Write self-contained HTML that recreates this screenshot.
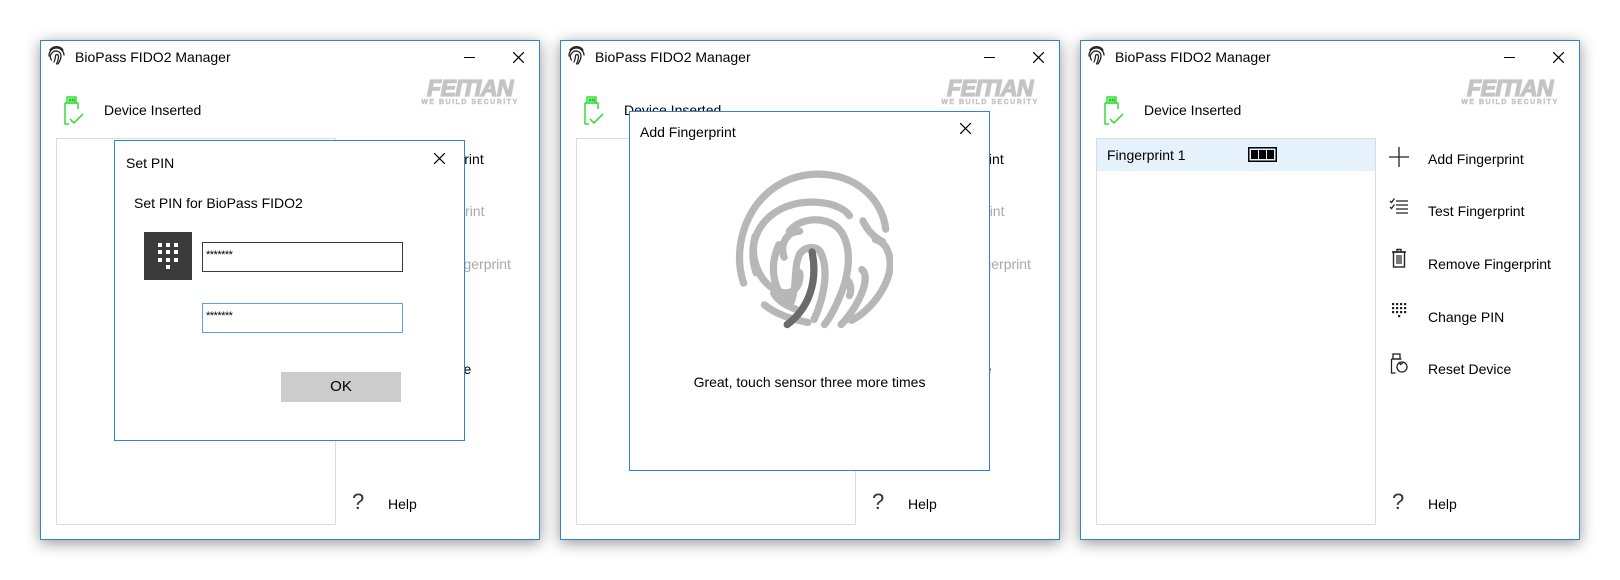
<!DOCTYPE html>
<html><head><meta charset="utf-8"><style>
*{margin:0;padding:0;box-sizing:border-box}
body{width:1620px;height:580px;background:#fff;position:relative;overflow:hidden;font-family:"Liberation Sans",sans-serif;color:#000}
.win{position:absolute;top:40px;width:500px;height:500px;background:#fff;border:1px solid #2a86d8;box-shadow:0 3px 14px rgba(0,0,0,.42)}
.a{position:absolute}
.title{left:34px;top:8px;font-size:14px;white-space:nowrap}
.min{left:423px;top:16px;width:11px;height:1px;background:#000}
.logo{left:380px;top:37px;width:98px;text-align:center;color:#c4c4c4;font-weight:bold;font-style:italic}
.logo b{display:block;font-size:23px;letter-spacing:-0.5px;line-height:21px;-webkit-text-stroke:1.3px #c4c4c4}
.logo i{display:block;font-size:7px;letter-spacing:1.5px;line-height:8px;font-style:normal;-webkit-text-stroke:0.4px #c4c4c4}
.dev{left:63px;top:61px;font-size:14px}
.list{left:15px;top:97px;width:280px;height:387px;border:1px solid #dcdcdc}
.m{left:347px;font-size:14px;white-space:nowrap}
.g{color:#a8a8a8}
.help{left:347px;top:455px;font-size:14px}
.q{left:311px;top:448px;font-size:22px;color:#333}
.dlg{position:absolute;background:#fff;border:1px solid #2a86d8}
</style></head><body>

<!-- WINDOW 1 -->
<div class="win" style="left:40px">
 <svg class="a" style="left:6px;top:5px" width="19" height="20" viewBox="0 0 19 20" fill="none" stroke="#222" stroke-width="1.3" stroke-linecap="round"><path d="M2 10a7.5 7.5 0 0 1 15-1"/><path d="M4.5 14a5 5 0 0 1 .5-7 5 5 0 0 1 9 3c0 3-1 5-3 8"/><path d="M7 16c1-2 1.5-4 1.5-6a1.5 1.5 0 0 1 3 0c0 3-.5 5-2 8"/><path d="M3 4a8 8 0 0 1 13 0"/></svg>
 <div class="a title">BioPass FIDO2 Manager</div>
 <div class="a min"></div>
 <svg class="a" style="left:472px;top:11px" width="11" height="11"><path d="M0 0L11 11M11 0L0 11" stroke="#000" stroke-width="1.2"/></svg>
 <div class="a logo"><b>FEITIAN</b><i>WE BUILD SECURITY</i></div>
 <svg class="a" style="left:22px;top:55px" width="24" height="30" viewBox="0 0 24 30" fill="none" stroke="#1bd61b" stroke-width="1.3"><rect x="4" y="1" width="9" height="6"/><rect x="6" y="3" width="2" height="2" fill="#1bd61b"/><rect x="9.5" y="3" width="2" height="2" fill="#1bd61b"/><path d="M2 7h13v6M2 7v21h4"/><path d="M7 23l4 4 9-9"/></svg>
 <div class="a dev">Device Inserted</div>
 <div class="a list"></div>
 <div class="a m" style="top:110px">Add Fingerprint</div>
 <div class="a m g" style="top:162px">Test Fingerprint</div>
 <div class="a m g" style="top:215px">Remove Fingerprint</div>
 <div class="a m" style="top:268px">Change PIN</div>
 <div class="a m" style="top:320px">Reset Device</div>
 <div class="a q">?</div>
 <div class="a help">Help</div>
 <div class="dlg" style="left:73px;top:99px;width:351px;height:301px">
  <div class="a" style="left:11px;top:14px;font-size:14px">Set PIN</div>
  <svg class="a" style="left:319px;top:12px" width="11" height="11"><path d="M0 0L11 11M11 0L0 11" stroke="#000" stroke-width="1.2"/></svg>
  <div class="a" style="left:19px;top:54px;font-size:14px">Set PIN for BioPass FIDO2</div>
  <div class="a" style="left:29px;top:91px;width:48px;height:48px;background:#3b3b3b">
   <svg width="48" height="48"><g fill="#fff"><rect x="14" y="11" width="4" height="4"/><rect x="22" y="11" width="4" height="4"/><rect x="30" y="11" width="4" height="4"/><rect x="14" y="18" width="4" height="4"/><rect x="22" y="18" width="4" height="4"/><rect x="30" y="18" width="4" height="4"/><rect x="14" y="26" width="4" height="4"/><rect x="22" y="26" width="4" height="4"/><rect x="30" y="26" width="4" height="4"/><rect x="22" y="33" width="4" height="4"/></g></svg>
  </div>
  <div class="a" style="left:87px;top:101px;width:201px;height:30px;border:1.5px solid #3a3a3a;font-size:11px;padding:6px 0 0 3px;letter-spacing:-0.5px">*******</div>
  <div class="a" style="left:87px;top:162px;width:201px;height:30px;border:1.5px solid #5aa2e2;font-size:11px;padding:6px 0 0 3px;letter-spacing:-0.5px">*******</div>
  <div class="a" style="left:166px;top:231px;width:120px;height:30px;background:#cccccc;font-size:15px;text-align:center;line-height:30px">OK</div>
 </div>
</div>

<!-- WINDOW 2 -->
<div class="win" style="left:560px">
 <svg class="a" style="left:6px;top:5px" width="19" height="20" viewBox="0 0 19 20" fill="none" stroke="#222" stroke-width="1.3" stroke-linecap="round"><path d="M2 10a7.5 7.5 0 0 1 15-1"/><path d="M4.5 14a5 5 0 0 1 .5-7 5 5 0 0 1 9 3c0 3-1 5-3 8"/><path d="M7 16c1-2 1.5-4 1.5-6a1.5 1.5 0 0 1 3 0c0 3-.5 5-2 8"/><path d="M3 4a8 8 0 0 1 13 0"/></svg>
 <div class="a title">BioPass FIDO2 Manager</div>
 <div class="a min"></div>
 <svg class="a" style="left:472px;top:11px" width="11" height="11"><path d="M0 0L11 11M11 0L0 11" stroke="#000" stroke-width="1.2"/></svg>
 <div class="a logo"><b>FEITIAN</b><i>WE BUILD SECURITY</i></div>
 <svg class="a" style="left:22px;top:55px" width="24" height="30" viewBox="0 0 24 30" fill="none" stroke="#1bd61b" stroke-width="1.3"><rect x="4" y="1" width="9" height="6"/><rect x="6" y="3" width="2" height="2" fill="#1bd61b"/><rect x="9.5" y="3" width="2" height="2" fill="#1bd61b"/><path d="M2 7h13v6M2 7v21h4"/><path d="M7 23l4 4 9-9"/></svg>
 <div class="a dev">Device Inserted</div>
 <div class="a list"></div>
 <div class="a m" style="top:110px">Add Fingerprint</div>
 <div class="a m g" style="top:162px">Test Fingerprint</div>
 <div class="a m g" style="top:215px">Remove Fingerprint</div>
 <div class="a m" style="top:268px">Change PIN</div>
 <div class="a m" style="top:320px">Reset Device</div>
 <div class="a q">?</div>
 <div class="a help">Help</div>
 <div class="dlg" style="left:68px;top:70px;width:361px;height:360px">
  <div class="a" style="left:10px;top:12px;font-size:14px">Add Fingerprint</div>
  <svg class="a" style="left:330px;top:11px" width="11" height="11"><path d="M0 0L11 11M11 0L0 11" stroke="#000" stroke-width="1.2"/></svg>
  <svg class="a" style="left:97px;top:57px" width="166" height="168" viewBox="0 0 160 162" fill="none" stroke="#b7b7b7" stroke-width="7" stroke-linecap="round">
   <path d="M16 110C2 70 25 8 85 5C125 4 150 30 153 58"/>
   <path d="M143 68C157 72 160 90 155 105C148 125 132 140 120 146"/>
   <path d="M28 100C15 60 45 30 85 32C105 33 115 40 118 45"/>
   <path d="M131 50C135 58 140 65 150 70"/>
   <path d="M27 65C22 85 30 110 50 118C65 124 72 110 70 100"/>
   <path d="M45 120C50 128 58 132 66 135"/>
   <path d="M60 60C70 48 90 45 105 55C120 68 120 95 110 120C104 135 98 145 94 150"/>
   <path d="M50 73C40 95 45 120 60 127"/>
   <path d="M55 85C50 70 60 60 70 60"/>
   <path d="M130 97C140 105 125 135 110 150"/>
   <path d="M115 106C120 110 120 118 118 122"/>
   <path d="M62 128C68 110 64 95 70 82C76 74 86 74 90 80C98 95 95 120 84 145"/>
   <path d="M36 131C50 142 65 145 78 148"/>
   <path d="M82 80C88 110 78 135 58 150" stroke="#6b6b6b"/>
  </svg>
  <div class="a" style="left:0;width:359px;top:262px;text-align:center;font-size:14px">Great, touch sensor three more times</div>
 </div>
</div>

<!-- WINDOW 3 -->
<div class="win" style="left:1080px">
 <svg class="a" style="left:6px;top:5px" width="19" height="20" viewBox="0 0 19 20" fill="none" stroke="#222" stroke-width="1.3" stroke-linecap="round"><path d="M2 10a7.5 7.5 0 0 1 15-1"/><path d="M4.5 14a5 5 0 0 1 .5-7 5 5 0 0 1 9 3c0 3-1 5-3 8"/><path d="M7 16c1-2 1.5-4 1.5-6a1.5 1.5 0 0 1 3 0c0 3-.5 5-2 8"/><path d="M3 4a8 8 0 0 1 13 0"/></svg>
 <div class="a title">BioPass FIDO2 Manager</div>
 <div class="a min"></div>
 <svg class="a" style="left:472px;top:11px" width="11" height="11"><path d="M0 0L11 11M11 0L0 11" stroke="#000" stroke-width="1.2"/></svg>
 <div class="a logo"><b>FEITIAN</b><i>WE BUILD SECURITY</i></div>
 <svg class="a" style="left:22px;top:55px" width="24" height="30" viewBox="0 0 24 30" fill="none" stroke="#1bd61b" stroke-width="1.3"><rect x="4" y="1" width="9" height="6"/><rect x="6" y="3" width="2" height="2" fill="#1bd61b"/><rect x="9.5" y="3" width="2" height="2" fill="#1bd61b"/><path d="M2 7h13v6M2 7v21h4"/><path d="M7 23l4 4 9-9"/></svg>
 <div class="a dev">Device Inserted</div>
 <div class="a list">
  <div class="a" style="left:0;top:0;width:278px;height:32px;background:#e5f1fb"></div>
  <div class="a" style="left:10px;top:8px;font-size:14px">Fingerprint 1</div>
  <svg class="a" style="left:151px;top:8px" width="29" height="15"><rect x="0.75" y="0.75" width="27.5" height="13.5" fill="none" stroke="#000" stroke-width="1.5"/><rect x="3" y="3" width="7" height="9"/><rect x="11" y="3" width="7" height="9"/><rect x="19" y="3" width="7" height="9"/></svg>
 </div>
 <svg class="a" style="left:308px;top:106px" width="20" height="20"><path d="M10 0V20M0 10H20" stroke="#222" stroke-width="1.3"/></svg>
 <svg class="a" style="left:308px;top:157px" width="20" height="16" fill="none" stroke="#222" stroke-width="1.3"><path d="M1 3l1.5 1.5 3-4M1 9l1.5 1.5 3-4"/><path d="M7 3h12M7 7h12M7 11h12M7 15h12"/></svg>
 <svg class="a" style="left:310px;top:207px" width="16" height="20" fill="none" stroke="#222" stroke-width="1.4"><path d="M1 4h14M6 4V1.5h4V4"/><rect x="2.5" y="4" width="11" height="15"/><path d="M6 7v9M8 7v9M10 7v9" stroke-width="1.2"/></svg>
 <svg class="a" style="left:310px;top:261px" width="16" height="20" fill="#222"><rect x="1" y="1" width="2.2" height="2.2"/><rect x="5" y="1" width="2.2" height="2.2"/><rect x="9" y="1" width="2.2" height="2.2"/><rect x="13" y="1" width="2.2" height="2.2"/><rect x="1" y="5" width="2.2" height="2.2"/><rect x="5" y="5" width="2.2" height="2.2"/><rect x="9" y="5" width="2.2" height="2.2"/><rect x="13" y="5" width="2.2" height="2.2"/><rect x="1" y="9" width="2.2" height="2.2"/><rect x="5" y="9" width="2.2" height="2.2"/><rect x="9" y="9" width="2.2" height="2.2"/><rect x="13" y="9" width="2.2" height="2.2"/><rect x="7" y="13" width="2.2" height="2.2"/></svg>
 <svg class="a" style="left:309px;top:312px" width="19" height="21" fill="none" stroke="#222" stroke-width="1.3"><rect x="3" y="1" width="7" height="5"/><path d="M1.5 6h10M1.5 6v14h4"/><circle cx="12" cy="14" r="5"/><path d="M9 9l1.5 2.5 2.5-1.5"/></svg>
 <div class="a m" style="top:110px">Add Fingerprint</div>
 <div class="a m" style="top:162px">Test Fingerprint</div>
 <div class="a m" style="top:215px">Remove Fingerprint</div>
 <div class="a m" style="top:268px">Change PIN</div>
 <div class="a m" style="top:320px">Reset Device</div>
 <div class="a q">?</div>
 <div class="a help">Help</div>
</div>
</body></html>
